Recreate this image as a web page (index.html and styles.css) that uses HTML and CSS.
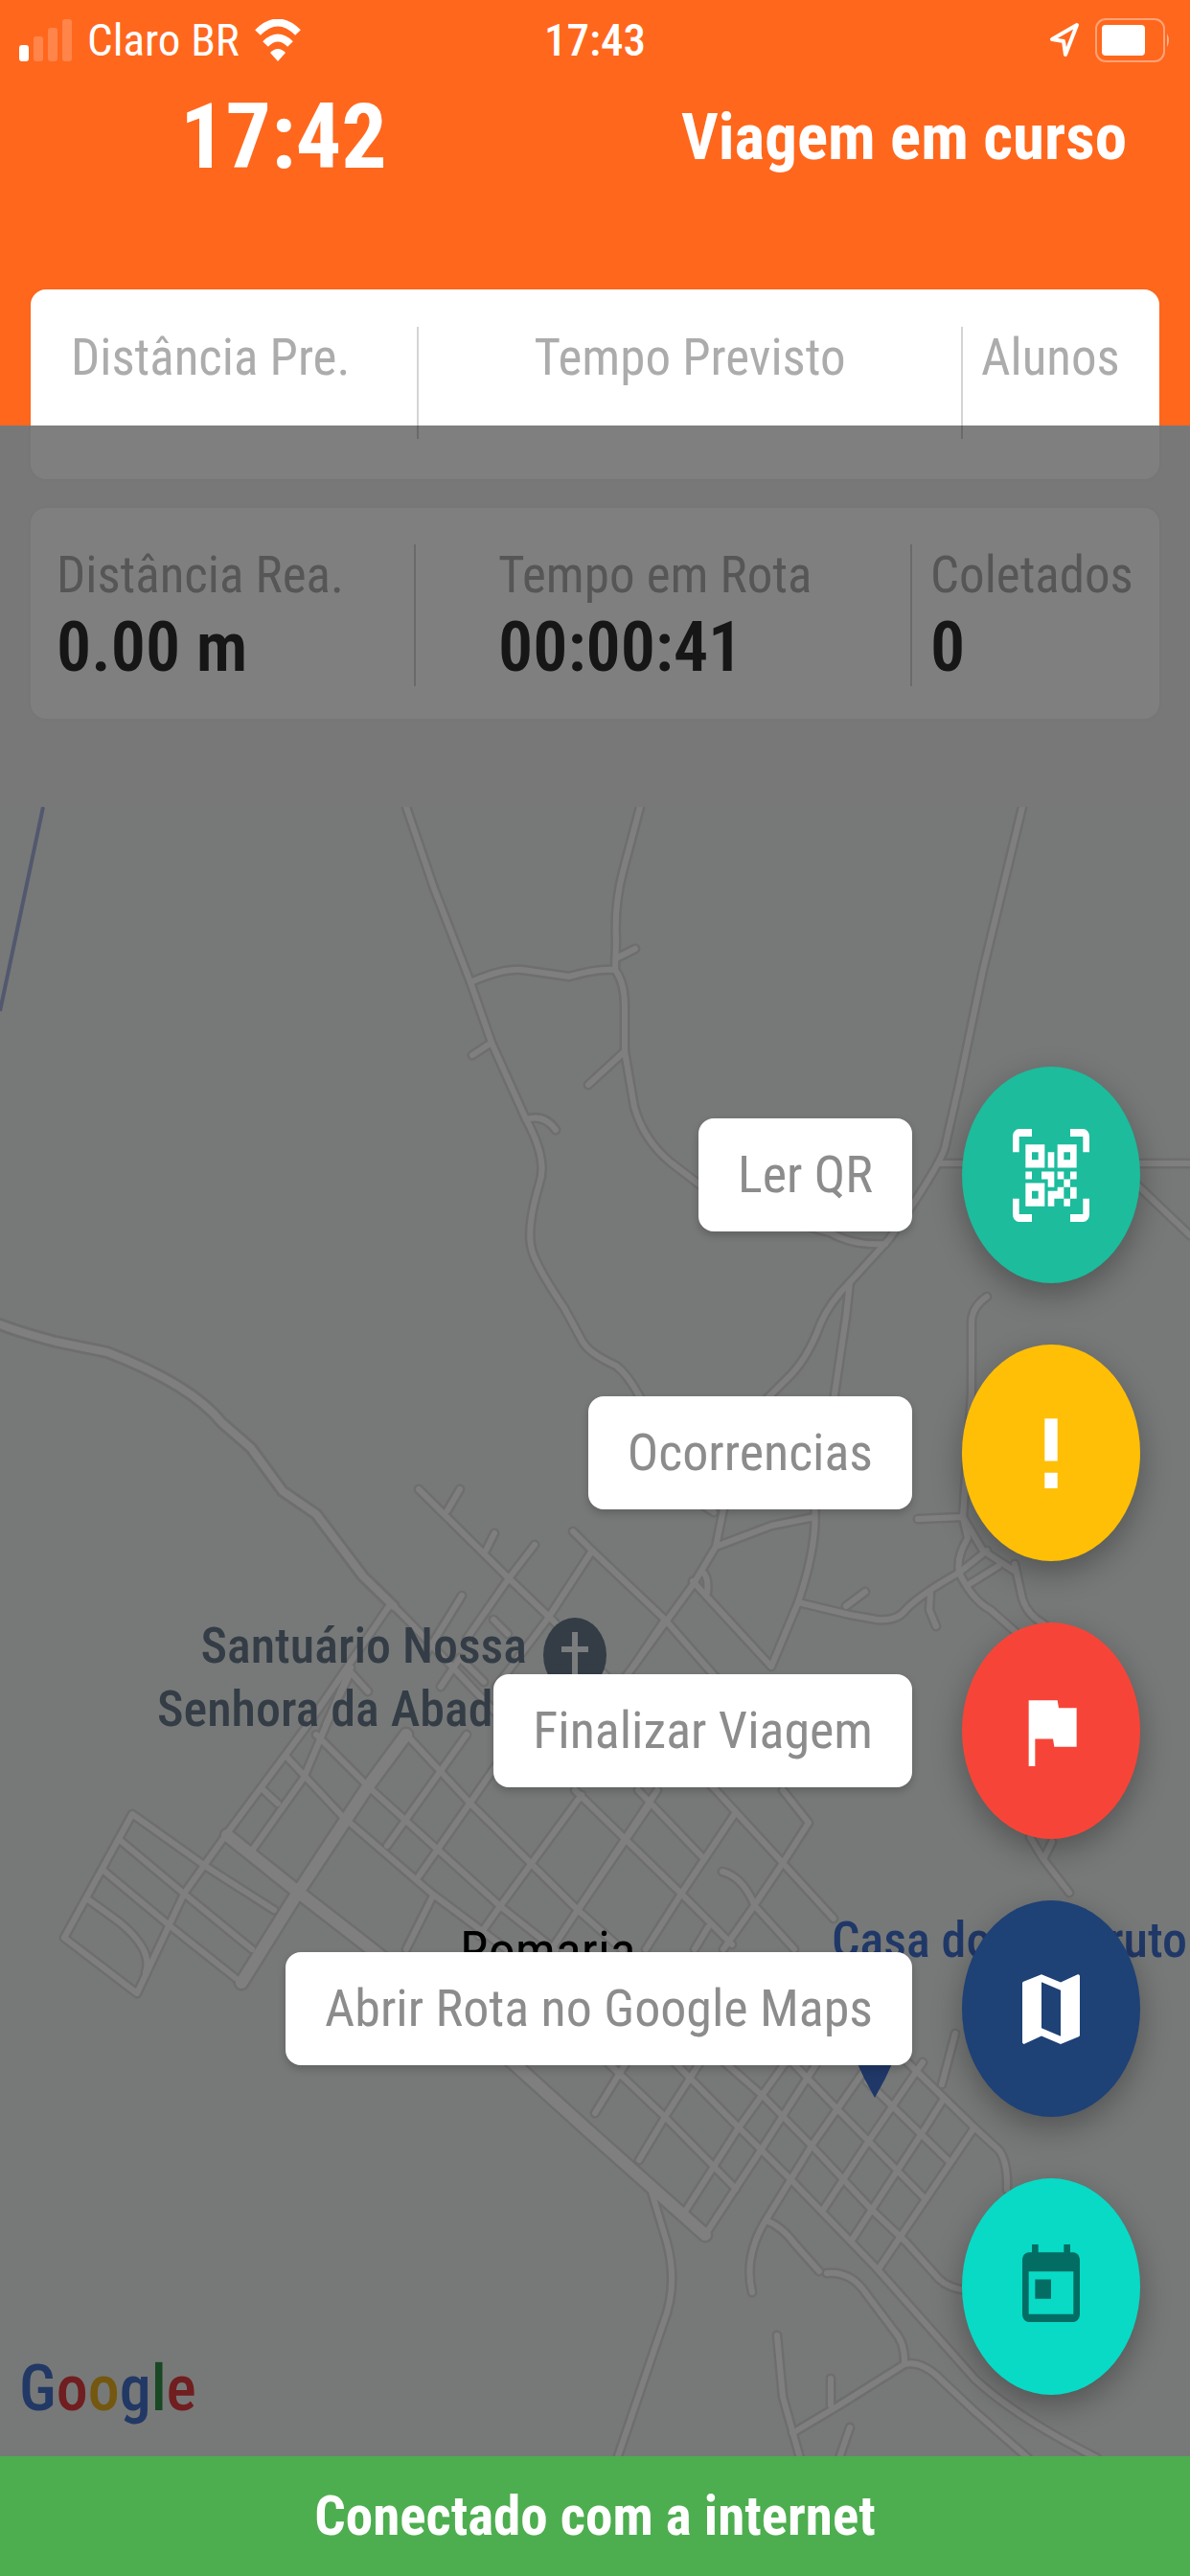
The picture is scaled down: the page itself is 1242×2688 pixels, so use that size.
FILE: index.html
```
<!DOCTYPE html>
<html lang="pt-BR">

<head>
    <meta charset="utf-8">
    <meta name="viewport" content="width=device-width, initial-scale=1">
    <title>Viagem em curso</title>

    <link rel="stylesheet" href="styles.css">
</head>

<body>
    <header class="header">
        <div class="statusbar">
            <div class="carrier">
                <svg class="signal" viewBox="0 0 55 44">
                    <rect x="0" y="27" width="10" height="17" rx="3" />
                    <g opacity="0.2">
                        <rect x="15" y="18" width="10" height="26" rx="3" />
                        <rect x="30" y="9" width="10" height="35" rx="3" />
                        <rect x="45" y="0" width="10" height="44" rx="3" />
                    </g>
                </svg>
                <span>Claro BR</span>
                <svg class="wifi" viewBox="0 0 48 44">
                    <path d="M24 44L16 35Q24 27 32 35Z" />
                    <path d="M11 26Q24 13 37 26" class="arc" />
                    <path d="M3 14Q24 -7 45 14" class="arc" />
                </svg>
            </div>
            <div class="clock">17:43</div>
            <div class="battery">
                <svg class="location" viewBox="0 0 32 38">
                    <path d="M29 3L3 18L15 20L17 34Z" />
                </svg>
                <svg class="charge" viewBox="0 0 79 46">
                    <rect x="1" y="1" width="71" height="44" rx="10" class="shell" />
                    <rect x="7" y="7" width="45" height="32" rx="4" />
                    <path d="M75 16Q79 23 75 30Z" opacity="0.5" />
                </svg>
            </div>
        </div>
        <div class="titlebar">
            <span class="start">17:42</span>
            <h1>Viagem em curso</h1>
        </div>
    </header>

    <section class="cards">
        <div class="card planned">
            <div class="cell"><span class="label">Distância Pre.</span></div>
            <div class="cell"><span class="label">Tempo Previsto</span></div>
            <div class="cell"><span class="label">Alunos</span></div>
        </div>
        <div class="card actual">
            <div class="cell"><span class="label">Distância Rea.</span><span class="value">0.00 m</span></div>
            <div class="cell"><span class="label">Tempo em Rota</span><span class="value">00:00:41</span></div>
            <div class="cell"><span class="label">Coletados</span><span class="value">0</span></div>
        </div>
    </section>

    <main class="map">
        <svg class="streets" viewBox="0 842 1242 1721" preserveAspectRatio="xMidYMid slice">
            <defs>
                <!-- country roads -->
                <g id="roads">
                    <path d="M424 842L453 927L491 1025L513 1088L549 1168Q572 1210 563 1235Q548 1285 556 1307Q562 1325 589 1365L608 1400Q616 1413 643 1425Q655 1434 668 1458" />
                    <path d="M668 842L650 910Q641 945 643 981L642 1012Q652 1025 652 1050V1097L662 1155Q672 1190 700 1213L730 1236Q800 1270 866 1286Q890 1300 924 1298" />
                    <path d="M491 1025Q525 1010 545 1012L594 1019Q625 1010 642 1012" />
                    <path d="M643 1000L663 990M513 1088L493 1101M549 1168Q568 1162 580 1179M652 1097L614 1132" />
                    <path d="M1067 842L1026 1012L1001 1132L986 1198Q980 1218 928 1293L887 1338Q865 1360 856 1382Q842 1420 820 1440L800 1460" />
                    <path d="M887 1338L883 1374L870 1462M981 1214H1242M1180 1230L1242 1289" />
                    <path d="M1030 1353Q1014 1364 1014 1380V1454L1005 1583" />
                    <path d="M958 1585L1005 1583L1026 1618L1060 1640M1005 1583L1010 1605Q998 1625 1001 1641Q1015 1670 1034 1680L1060 1703" />
                    <path d="M833 1672L887 1685L915 1690Q936 1692 945 1680Q960 1664 1001 1641L1030 1618M883 1676L903 1661M971 1663L970 1680L977 1697M1010 1654L1042 1634" />
                    <path d="M1059 1632L1067 1668Q1072 1685 1090 1695" />
                    <path d="M756 1570L747 1614L723 1654L661 1739L607 1810M747 1614L805 1592L850 1583M733 1640Q740 1645 738 1662M725 1565L745 1578" />
                    <path d="M850 1570Q854 1610 833 1672L805 1739M723 1650L805 1739" />
                    <path d="M1098 1922L1089 1940L1116 1975M1075 1917L1089 1940" />
                    <path d="M680 2287L696 2340Q708 2385 692 2425L645 2563" />
                    <path d="M799 2317Q815 2322 830 2342L855 2370M863 2372Q885 2370 900 2388L933 2432Q945 2445 944 2467L874 2511L827 2539" />
                    <path d="M944 2467Q962 2463 982 2483L1017 2516L1073 2565" />
                    <path d="M811 2437L817 2501L835 2565M867 2482V2510M887 2533L876 2565" />
                    <path d="M997 2122L983 2175" />
                </g>
                <!-- town grid -->
                <g id="grid">
                    <path d="M598 1598L618 1618L694 1690L817 1830" />
                    <path d="M437 1554L531 1647L576 1690L747 1868L817 1944L870 2002" />
                    <path d="M467 1576L480 1554M507 1618L516 1600" />
                    <path d="M558 1612L531 1647L487 1710M618 1618L571 1690L518 1760M482 1665L445 1725M515 1690L530 1705M694 1690L661 1739" />
                    <path d="M406 1676L321 1800L237 1913L192 1976L143 2080L67 2022L138 1893L214 1947L286 1993" />
                    <path d="M366 1740L317 1855L263 1931M487 1810L404 1926M518 1842L437 1958" />
                    <path d="M340 1800L366 1745L384 1765M460 1760L480 1730L505 1755" />
                    <path d="M607 1873L522 1989L500 2020M679 1882L603 1993L575 2035M451 1980L424 2034" />
                    <path d="M125 1920L192 1976L263 2034M107 1951L179 2011L252 2069M92 1982L125 2006Q160 2035 152 2058" />
                    <path d="M275 1868L290 1882M299 1833L357 1895L451 1976L530 2035M330 1810L384 1864L522 1989L580 2035M424 1810L491 1882L603 1993L650 2035" />
                    <path d="M600 1868L711 1976L764 2029M666 1868L735 1940M754 1953Q775 1958 788 1989L829 2034" />
                    <path d="M817 1868L844 1902L817 1944L784 1993L755 2034M768 1891L711 1976L674 2034M686 1868L603 1993M739 2011L725 2034" />
                    <path d="M655 2150L621 2205M732 2150L694 2209L667 2254M820 2152L771 2220L716 2306M853 2152L795 2242L736 2332" />
                    <path d="M908 2152L847 2239L799 2317Q776 2355 785 2392M963 2152L906 2235L859 2306M985 2190L966 2220L890 2336M1017 2220L966 2295L918 2366" />
                    <path d="M635 2153L694 2209L768 2284M702 2150L771 2220L827 2276L914 2366L1017 2482Q1060 2522 1145 2565" />
                    <path d="M754 2150L795 2186L847 2239L910 2306L946 2340L980 2378Q990 2388 1010 2390M825 2150L874 2201L966 2295M905 2172L989 2254" />
                    <path d="M945 2150L1017 2220L1042 2243Q1052 2255 1051 2285" />
                    <path d="M411 1676L429 1694L520 1790" />
                </g>
                <g id="avenues">
                    <path d="M0 1382Q20 1390 58 1400L112 1411Q200 1445 232 1485L262 1511L295 1556L330 1580L379 1645L411 1676" />
                </g>
                <g id="main">
                    <path d="M424 1810L384 1864L312 1973L252 2069M237 1915L312 1975L388 2034L535 2152L618 2227L736 2332" />
                </g>
            </defs>
            <path d="M45 842L0 1055" class="border" />
            <use href="#roads" class="casing" />
            <use href="#grid" class="casing" />
            <use href="#avenues" class="casing wide" />
            <use href="#main" class="casing wider" />
            <use href="#roads" class="road" />
            <use href="#grid" class="road" />
            <use href="#avenues" class="road wide" />
            <use href="#main" class="road wider" />

            <ellipse cx="600" cy="1727" rx="33" ry="39" class="church" />
            <path d="M600 1703V1760M586 1721H614" class="cross" />
            <path d="M880 2110Q890 2150 913 2189Q936 2150 946 2110Z" class="store" />

            <text x="550" y="1735" class="place church" text-anchor="end">Santuário Nossa</text>
            <text x="164" y="1801" class="place church">Senhora da Abadia</text>
            <text x="480" y="2055" class="place town">Romaria</text>
            <text x="868" y="2042" class="place store">Casa do</text>
            <text x="1239" y="2042" class="place store" text-anchor="end">ruto</text>
        </svg>
        <div class="google"><span class="blue">G</span><span class="red">o</span><span class="yellow">o</span><span class="blue">g</span><span class="green">l</span><span class="red">e</span></div>
    </main>

    <div class="scrim"></div>

    <nav class="actions">
        <button class="action">
            <span class="tip">Ler QR</span>
            <span class="fab qr">
                <svg viewBox="0 0 24 24" preserveAspectRatio="none">
                    <path d="M4,4H10V10H4V4M20,4V10H14V4H20M14,15H16V13H14V11H16V13H18V11H20V13H18V15H20V18H18V20H16V18H13V20H11V16H14V15M16,15V18H18V15H16M4,20V14H10V20H4M6,6V8H8V6H6M16,6V8H18V6H16M6,16V18H8V16H6M4,11H6V13H4V11M9,11H13V15H11V13H9V11M11,6H13V10H11V6M2,2V6H0V2A2,2 0 0,1 2,0H6V2H2M22,0A2,2 0 0,1 24,2V6H22V2H18V0H22M2,18V22H6V24H2A2,2 0 0,1 0,22V18H2M22,22V18H24V22A2,2 0 0,1 22,24H18V22H22Z" />
                </svg>
            </span>
        </button>
        <button class="action">
            <span class="tip">Ocorrencias</span>
            <span class="fab alert">
                <svg viewBox="0 0 24 24" preserveAspectRatio="none">
                    <path d="M10 3H14V14H10V3M10 21V17H14V21H10Z" />
                </svg>
            </span>
        </button>
        <button class="action">
            <span class="tip">Finalizar Viagem</span>
            <span class="fab finish">
                <svg viewBox="0 0 24 24" preserveAspectRatio="none">
                    <path d="M14.4 6L14 4H5v17h2v-7h5.6l.4 2h7V6z" />
                </svg>
            </span>
        </button>
        <button class="action">
            <span class="tip">Abrir Rota no Google Maps</span>
            <span class="fab route">
                <svg viewBox="0 0 24 24" preserveAspectRatio="none">
                    <path d="M20.5 3l-.16.03L15 5.1 9 3 3.36 4.9c-.21.07-.36.25-.36.48V20.5c0 .28.22.5.5.5l.16-.03L9 18.9l6 2.1 5.64-1.9c.21-.07.36-.25.36-.48V3.5c0-.28-.22-.5-.5-.5zM15 19l-6-2.11V5l6 2.11V19z" />
                </svg>
            </span>
        </button>
        <button class="action" aria-label="Agenda">
            <span class="fab today">
                <svg viewBox="0 0 24 24" preserveAspectRatio="none">
                    <path d="M19 3h-1V1h-2v2H8V1H6v2H5c-1.11 0-1.99.9-1.99 2L3 19c0 1.1.89 2 2 2h14c1.1 0 2-.9 2-2V5c0-1.1-.9-2-2-2zm0 16H5V8h14v11zM7 10h5v5H7z" />
                </svg>
            </span>
        </button>
    </nav>

    <footer class="connection">Conectado com a internet</footer>
</body>

</html>
```
FILE: styles.css
```
* {
    box-sizing: border-box;
}

body {
    position: relative;
    display: flex;
    flex-direction: column;
    min-height: 100vh;
    margin: 0;
    background-color: #f0f0f0;
    font-family: "Roboto Condensed", Roboto, sans-serif;
}

.header {
    height: 444px;
    background-color: #ff671d;
    color: white;
}

.statusbar {
    display: grid;
    grid-template-columns: 1fr auto 1fr;
    align-items: center;
    height: 84px;
    padding: 0 20px;
    font-size: 47px;
    line-height: 64px;
}

.statusbar svg {
    fill: white;
}

.carrier,
.battery {
    display: flex;
    align-items: center;
    gap: 16px;
}

.battery {
    justify-content: flex-end;
}

.clock {
    font-weight: 500;
}

.signal {
    width: 55px;
    height: 44px;
}

.wifi {
    width: 48px;
    height: 44px;
}

.wifi .arc {
    fill: none;
    stroke: white;
    stroke-width: 8px;
}

.location {
    width: 32px;
    height: 38px;
}

.statusbar .location path {
    fill: none;
    stroke: white;
    stroke-width: 4px;
    stroke-linejoin: round;
}

.charge {
    width: 79px;
    height: 46px;
}

.charge .shell {
    fill: none;
    stroke: rgba(255, 255, 255, 0.4);
    stroke-width: 2px;
}

.titlebar {
    display: flex;
    justify-content: space-between;
    align-items: center;
    height: 118px;
    padding: 0 66px 0 188px;
}

.start {
    font-size: 94px;
    font-weight: 700;
}

h1 {
    margin: 0;
    font-size: 67px;
    font-weight: 700;
}

/* the first card hangs over the bottom of the header */
.cards {
    display: flex;
    flex-direction: column;
    gap: 30px;
    margin: -142px 32px 92px;
}

.card {
    display: grid;
    background-color: white;
    border-radius: 16px;
    box-shadow: 0 0 4px rgba(0, 0, 0, 0.04);
}

.planned {
    grid-template-columns: 403fr 568fr 207fr;
    padding: 39px 0 42px;
}

.actual {
    grid-template-columns: 400fr 518fr 260fr;
    padding: 38px 0 34px;
}

.cell {
    display: flex;
    flex-direction: column;
    gap: 4px;
    border-left: 2px solid #d4d4d4;
}

.cell:first-child {
    border-left: none;
}

.planned .cell {
    height: 117px;
    padding-left: 19px;
}

.planned .cell:first-child {
    padding-left: 42px;
}

.planned .cell:nth-child(2) {
    align-items: center;
    padding-left: 0;
}

.actual .cell {
    padding-left: 19px;
}

.actual .cell:first-child {
    padding-left: 27px;
}

.actual .cell:nth-child(2) {
    padding-left: 86px;
}

.label {
    color: #acacac;
    font-size: 53px;
    line-height: 64px;
}

.value {
    color: #2c2c2c;
    font-size: 72px;
    font-weight: 600;
    line-height: 80px;
}

.map {
    position: relative;
    flex: 1;
    background-color: #eef2f0;
}

.streets {
    position: absolute;
    width: 100%;
    height: 100%;
}

.casing,
.road {
    fill: none;
    stroke-linejoin: round;
    stroke-linecap: round;
}

.casing {
    stroke: #dadddb;
    stroke-width: 11px;
}

.road {
    stroke: #ffffff;
    stroke-width: 6px;
}

.casing.wide {
    stroke-width: 14px;
}

.road.wide {
    stroke-width: 8px;
}

.casing.wider {
    stroke-width: 17px;
}

.road.wider {
    stroke-width: 12px;
}

.border {
    stroke: #a4b0dc;
    stroke-width: 4px;
}

.cross {
    stroke: #f4f8fc;
    stroke-width: 6px;
}

.church {
    fill: #687a8c;
}

.store {
    fill: #4070d0;
}

.place {
    font-size: 52px;
    font-weight: 500;
}

.town {
    fill: black;
    font-size: 56px;
    font-weight: 400;
}

.google {
    position: absolute;
    left: 20px;
    bottom: 35px;
    font-size: 66px;
    font-weight: 500;
    line-height: 70px;
}

.blue {
    color: #4472cc;
}

.red {
    color: #e03c40;
}

.yellow {
    color: #e8b020;
}

.green {
    color: #309048;
}

.scrim {
    position: absolute;
    top: 444px;
    left: 0;
    right: 0;
    bottom: 125px;
    background-color: rgba(0, 0, 0, 0.5);
}

.actions {
    position: absolute;
    right: 52px;
    bottom: 189px;
    display: flex;
    flex-direction: column;
    align-items: flex-end;
    gap: 64px;
}

.action {
    display: flex;
    align-items: center;
    gap: 52px;
    padding: 0;
    border: none;
    background: none;
    font-family: inherit;
    cursor: pointer;
}

.tip {
    padding: 27px 41px;
    border-radius: 16px;
    background-color: white;
    box-shadow: 0 4px 8px rgba(0, 0, 0, 0.2);
    color: #8c8c8c;
    font-size: 54px;
    line-height: 64px;
}

.fab {
    display: flex;
    justify-content: center;
    align-items: center;
    width: 186px;
    height: 226px;
    border-radius: 50%;
    box-shadow: 0 12px 32px rgba(0, 0, 0, 0.3);
}

.fab svg {
    width: 80px;
    height: 97px;
    fill: white;
}

.qr {
    background-color: #1cbc9c;
}

.alert {
    background-color: #ffbf06;
}

.finish {
    background-color: #f64538;
}

.route {
    background-color: #1e4176;
}

.today {
    background-color: #08dac6;
}

.today svg {
    fill: #046d63;
}

.connection {
    height: 125px;
    background-color: #4dae4f;
    color: white;
    font-size: 57px;
    font-weight: 700;
    line-height: 125px;
    text-align: center;
}
```
